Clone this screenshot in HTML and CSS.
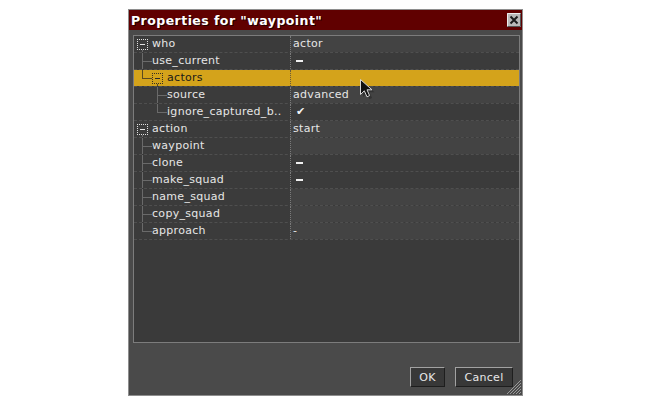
FILE: index.html
```html
<!DOCTYPE html>
<html>
<head>
<meta charset="utf-8">
<link rel="stylesheet" href="styles.css">
</head>
<body>
<div class="window">
  <div class="titlebar">
    <span class="title">Properties for "waypoint"</span>
    <span class="close">
      <svg width="14" height="14" viewBox="0 0 14 14">
        <rect x="0" y="0" width="14" height="14" fill="#b9b9b9"/>
        <path d="M0.5 13.5V0.5H13.5" fill="none" stroke="#ececec"/>
        <path d="M0.5 13.5H13.5V0.5" fill="none" stroke="#555555"/>
        <path d="M3.5 3.5L10.5 10.5M10.5 3.5L3.5 10.5" stroke="#1c1c1c" stroke-width="2"/>
      </svg>
    </span>
  </div>
  <div class="body">
    <div class="props">
      <div class="row">
        <div class="name"><span class="exp"><span class="box"></span></span><span class="label">who</span></div>
        <div class="value">actor</div>
      </div>
      <div class="row bool">
        <div class="name"><span class="g tee"></span><span class="label">use_current</span></div>
        <div class="value"><span class="dash"></span></div>
      </div>
      <div class="row sel">
        <div class="name"><span class="g ell"></span><span class="exp"><span class="box"></span></span><span class="label">actors</span></div>
        <div class="value"></div>
      </div>
      <div class="row">
        <div class="name"><span class="g"></span><span class="g tee"></span><span class="label">source</span></div>
        <div class="value">advanced</div>
      </div>
      <div class="row bool">
        <div class="name"><span class="g"></span><span class="g ell"></span><span class="label">ignore_captured_b..</span></div>
        <div class="value"><span class="check">✔</span></div>
      </div>
      <div class="row">
        <div class="name"><span class="exp"><span class="box"></span></span><span class="label">action</span></div>
        <div class="value">start</div>
      </div>
      <div class="row">
        <div class="name"><span class="g tee"></span><span class="label">waypoint</span></div>
        <div class="value"></div>
      </div>
      <div class="row bool">
        <div class="name"><span class="g tee"></span><span class="label">clone</span></div>
        <div class="value"><span class="dash"></span></div>
      </div>
      <div class="row bool">
        <div class="name"><span class="g tee"></span><span class="label">make_squad</span></div>
        <div class="value"><span class="dash"></span></div>
      </div>
      <div class="row">
        <div class="name"><span class="g tee"></span><span class="label">name_squad</span></div>
        <div class="value"></div>
      </div>
      <div class="row">
        <div class="name"><span class="g tee"></span><span class="label">copy_squad</span></div>
        <div class="value"></div>
      </div>
      <div class="row">
        <div class="name"><span class="g ell"></span><span class="label">approach</span></div>
        <div class="value">-</div>
      </div>
    </div>
    <div class="footer">
      <button class="btn ok">OK</button>
      <button class="btn cancel">Cancel</button>
    </div>
  </div>
  <svg class="grip" width="16" height="16" viewBox="0 0 16 16">
    <path d="M15 1L1 15M15 4L4 15M15 7L7 15M15 10L10 15M15 13L13 15" stroke="#9a9a9a" stroke-width="1"/>
  </svg>
</div>
<svg class="cursor" width="16" height="22" viewBox="0 0 16 22">
  <path d="M2.5 2.5V17.5L6.3 13.8L9 19.8L11.6 18.6L9 12.8H14Z" fill="#000" opacity="0.25" transform="translate(1.5,1.5)"/>
  <path d="M1.5 1.5V16.5L5.3 12.8L8 18.8L10.6 17.6L8 11.8H13Z" fill="#111" stroke="#d8d8d8" stroke-width="1" stroke-linejoin="round"/>
</svg>
</body>
</html>
```

FILE: styles.css
```css
html, body {
  margin: 0;
  padding: 0;
  background: #ffffff;
}

body {
  width: 650px;
  height: 410px;
  overflow: hidden;
  position: relative;
  font-family: "DejaVu Sans", Verdana, sans-serif;
}

.window {
  position: relative;
  margin-left: 128px;
  margin-top: 9px;
  width: 395px;
  height: 387px;
  box-sizing: border-box;
  border: 1px solid #8e8e8e;
  background: #4a4a4a;
  display: flex;
  flex-direction: column;
}

.titlebar {
  height: 20px;
  background: #600000;
  display: flex;
  align-items: center;
  justify-content: space-between;
  padding: 0 1px 0 2px;
}

.title {
  color: #ffffff;
  font-weight: bold;
  font-size: 12.5px;
  letter-spacing: 0.45px;
  text-shadow: 1px 1px 0 #200000;
}

.close {
  display: flex;
  width: 14px;
  height: 14px;
}

.body {
  flex: 1;
  display: flex;
  flex-direction: column;
  padding: 5px 2px 0 4px;
}

.props {
  height: 308px;
  box-sizing: border-box;
  border: 1px solid #7c7c7c;
  background: #3a3a3a;
  display: flex;
  flex-direction: column;
}

.row {
  display: grid;
  grid-template-columns: 156px 1fr;
  height: 17px;
  box-sizing: border-box;
  border-bottom: 1px dashed #4f4f4f;
  font-size: 11px;
  line-height: 16px;
  letter-spacing: 0.3px;
  color: #e6e6e6;
}

.name {
  display: flex;
  align-items: stretch;
  padding-left: 3px;
  background: #3b3b3b;
  white-space: nowrap;
  overflow: hidden;
}

.label {
  display: block;
}

.value {
  border-left: 1px dotted #7a7a7a;
  padding-left: 2px;
  background: #434343;
  display: flex;
  align-items: center;
}

.bool .value {
  background: #3b3b3b;
}

.g {
  width: 15px;
  flex: none;
}

.g.tee {
  background:
    linear-gradient(#6a6a6a, #6a6a6a) 5px 0 / 1px 16px no-repeat,
    linear-gradient(#6a6a6a, #6a6a6a) 5px 8px / 10px 1px no-repeat;
}

.g.ell {
  background:
    linear-gradient(#6a6a6a, #6a6a6a) 5px 0 / 1px 9px no-repeat,
    linear-gradient(#6a6a6a, #6a6a6a) 5px 8px / 10px 1px no-repeat;
}

.exp {
  width: 11px;
  flex: none;
  margin-right: 4px;
  display: flex;
  align-items: flex-start;
  padding-top: 3px;
  box-sizing: border-box;
  background: linear-gradient(#6a6a6a, #6a6a6a) 5px 14px / 1px 2px no-repeat;
}

.box {
  width: 11px;
  height: 11px;
  box-sizing: border-box;
  border: 1px dotted #e0e0e0;
  background: linear-gradient(#e6e6e6, #e6e6e6) 2px 4px / 5px 1px no-repeat;
}

.sel .name,
.sel .value {
  background: #d4a31b;
  color: #1a1a1a;
}

.sel .value {
  border-left-color: #6a5a3a;
}

.sel .box {
  border-color: #3a3020;
  background: linear-gradient(#2a2a2a, #2a2a2a) 2px 4px / 5px 1px no-repeat;
}

.sel .g.ell {
  background:
    linear-gradient(#5a4a20, #5a4a20) 5px 0 / 1px 9px no-repeat,
    linear-gradient(#5a4a20, #5a4a20) 5px 8px / 10px 1px no-repeat;
}

.sel .exp {
  background: linear-gradient(#5a4a20, #5a4a20) 5px 14px / 1px 2px no-repeat;
}

.dash {
  display: block;
  width: 7px;
  height: 2px;
  margin-left: 3px;
  background: #f0f0f0;
}

.check {
  margin-left: 3px;
  font-size: 11px;
  font-weight: bold;
  color: #f4f4f4;
}

.footer {
  flex: 1;
  display: flex;
  justify-content: flex-end;
  align-items: flex-start;
  gap: 10px;
  padding: 24px 7px 0 0;
}

.btn {
  height: 20px;
  box-sizing: border-box;
  background: #383838;
  border: 1px solid;
  border-color: #a2a2a2 #1e1e1e #1e1e1e #a2a2a2;
  color: #e8e8e8;
  font-family: "DejaVu Sans", Verdana, sans-serif;
  font-size: 11px;
  letter-spacing: 0.3px;
  padding: 0;
  line-height: 17px;
}

.btn.ok {
  width: 35px;
}

.btn.cancel {
  width: 58px;
}

.grip {
  position: absolute;
  right: 0;
  bottom: 0;
}

.cursor {
  position: absolute;
  left: 359px;
  top: 78px;
}
```
